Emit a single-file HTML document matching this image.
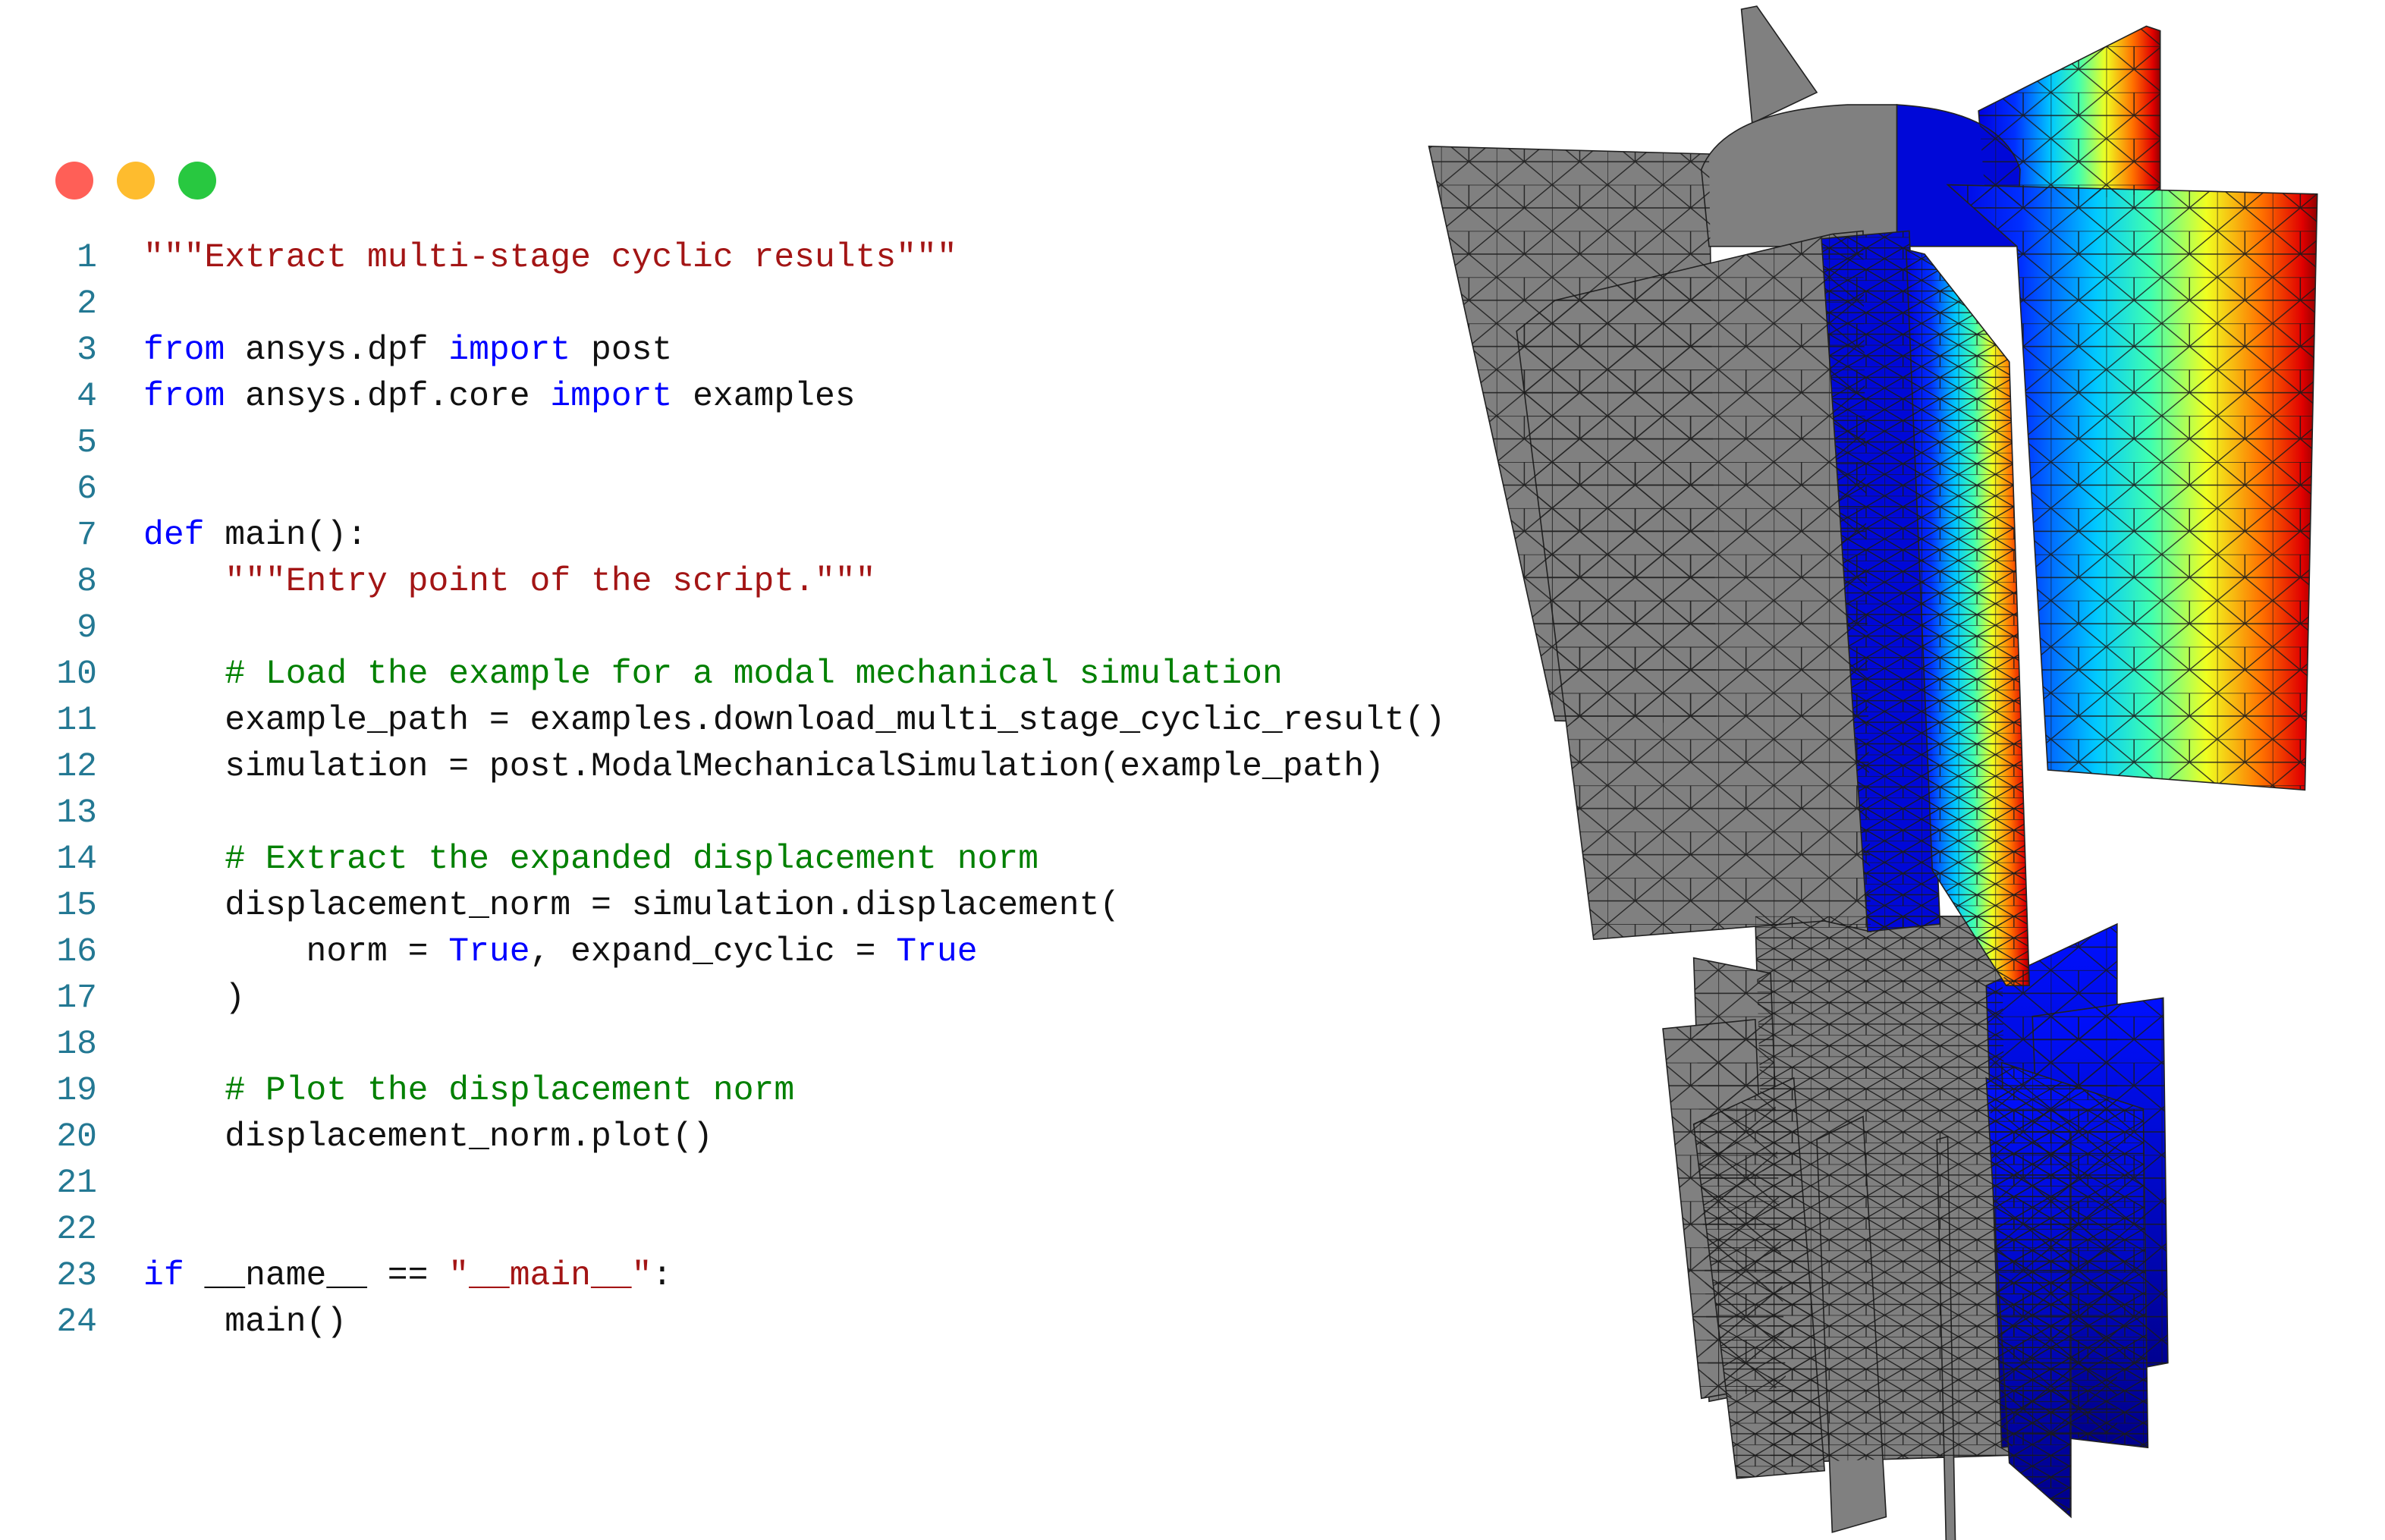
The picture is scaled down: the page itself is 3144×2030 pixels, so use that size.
<!DOCTYPE html>
<html><head><meta charset="utf-8"><style>
html,body{margin:0;padding:0;background:#fff;}
body{width:3144px;height:2030px;position:relative;overflow:hidden;}
.dot{position:absolute;width:50px;height:50px;border-radius:50%;top:213px;}
#code{position:absolute;left:0;top:310px;font-family:"Liberation Mono",monospace;font-size:44.7px;line-height:61px;white-space:pre;color:#111;}
.ln{display:inline-block;width:128px;text-align:right;color:#237893;margin-right:61px;}
.k{color:#0000ff}.s{color:#a31515}.c{color:#008000}
svg{position:absolute;left:0;top:0;}
</style></head><body>
<div class="dot" style="left:73px;background:#ff5f57"></div>
<div class="dot" style="left:154px;background:#febc2e"></div>
<div class="dot" style="left:235px;background:#28c840"></div>
<div id="code"><div><span class="ln">1</span><span class="s">"""Extract multi-stage cyclic results"""</span></div><div><span class="ln">2</span></div><div><span class="ln">3</span><span class="k">from</span> ansys.dpf <span class="k">import</span> post</div><div><span class="ln">4</span><span class="k">from</span> ansys.dpf.core <span class="k">import</span> examples</div><div><span class="ln">5</span></div><div><span class="ln">6</span></div><div><span class="ln">7</span><span class="k">def</span> main():</div><div><span class="ln">8</span>    <span class="s">"""Entry point of the script."""</span></div><div><span class="ln">9</span></div><div><span class="ln">10</span>    <span class="c"># Load the example for a modal mechanical simulation</span></div><div><span class="ln">11</span>    example_path = examples.download_multi_stage_cyclic_result()</div><div><span class="ln">12</span>    simulation = post.ModalMechanicalSimulation(example_path)</div><div><span class="ln">13</span></div><div><span class="ln">14</span>    <span class="c"># Extract the expanded displacement norm</span></div><div><span class="ln">15</span>    displacement_norm = simulation.displacement(</div><div><span class="ln">16</span>        norm = <span class="k">True</span>, expand_cyclic = <span class="k">True</span></div><div><span class="ln">17</span>    )</div><div><span class="ln">18</span></div><div><span class="ln">19</span>    <span class="c"># Plot the displacement norm</span></div><div><span class="ln">20</span>    displacement_norm.plot()</div><div><span class="ln">21</span></div><div><span class="ln">22</span></div><div><span class="ln">23</span><span class="k">if</span> __name__ == <span class="s">"__main__"</span>:</div><div><span class="ln">24</span>    main()</div></div>
<svg width="3144" height="2030" viewBox="0 0 1549 1000" preserveAspectRatio="none">
<defs>
<pattern id="m" width="36" height="30" patternUnits="userSpaceOnUse">
<path d="M0 0L36 0M0 15L36 15M0 0L18 15L36 0M0 30L18 15L36 30M18 15L18 0M0 0L0 30" stroke="#1a1a1a" stroke-width="0.7" fill="none"/>
</pattern>
<pattern id="m2" width="24" height="14" patternUnits="userSpaceOnUse">
<path d="M0 0L24 0M0 7L24 7M0 0L12 7L24 0M0 14L12 7L24 14M0 0L0 14M12 7L12 14" stroke="#1a1a1a" stroke-width="0.6" fill="none"/>
</pattern>
<linearGradient id="jet" x1="0" x2="1" y1="0" y2="0">
<stop offset="0" stop-color="#0000e0"/><stop offset="0.2" stop-color="#0030ff"/><stop offset="0.4" stop-color="#00c8ff"/><stop offset="0.55" stop-color="#40ffb0"/><stop offset="0.7" stop-color="#f0ff20"/><stop offset="0.85" stop-color="#ff7000"/><stop offset="0.96" stop-color="#e00000"/><stop offset="1" stop-color="#900000"/>
</linearGradient>
<linearGradient id="dblue" x1="0" x2="0" y1="0" y2="1"><stop offset="0" stop-color="#0010ff"/><stop offset="1" stop-color="#00008a"/></linearGradient>
</defs>
<g stroke="#222" stroke-width="0.8">
<polygon points="1131,6 1141,4 1180,60 1138,80" fill="#808080"/>
<polygon points="1285,72 1394,17 1403,20 1403,125 1290,135" fill="url(#jet)"/>
<polygon points="928,95 1110,100 1115,470 1010,468" fill="#808080"/>
<path d="M1105,110 Q1120,72 1200,68 L1232,68 L1232,160 L1110,160 Z" fill="#808080"/>
<path d="M1232,68 Q1300,72 1312,110 L1310,160 L1232,160 Z" fill="#0008d8"/>
<polygon points="1140,595 1300,595 1305,945 1150,950" fill="#808080"/>
<polygon points="1100,622 1150,632 1160,900 1110,910" fill="#808080"/>
<polygon points="1080,668 1140,662 1150,900 1105,908" fill="#808080"/>
<polygon points="1100,730 1165,700 1185,955 1128,960" fill="#808080"/>
<polygon points="1180,740 1210,725 1225,985 1190,995" fill="#808080"/>
<polygon points="1258,740 1265,738 1270,1005 1264,1005" fill="#808080"/>
<polygon points="1290,640 1375,600 1375,930 1300,940" fill="url(#dblue)"/>
<polygon points="1320,660 1405,648 1408,885 1330,900" fill="url(#dblue)"/>
<polygon points="1300,690 1392,720 1395,940 1310,930" fill="url(#dblue)"/>
<polygon points="1290,700 1345,735 1345,985 1305,950" fill="url(#dblue)"/>
<polygon points="985,215 1010,195 1190,152 1210,150 1215,605 1185,598 1035,610" fill="#808080"/>
<polygon points="1183,155 1240,150 1260,600 1213,605" fill="#0008d8"/>
<polygon points="1265,120 1505,126 1497,513 1330,500 1310,160" fill="url(#jet)"/>
<polygon points="1238,162 1250,165 1305,235 1318,640 1303,640 1255,565" fill="url(#jet)"/>
</g>
<g fill="url(#m)" stroke="none" opacity="0.9">
<polygon points="928,95 1110,100 1115,470 1010,468"/>
<polygon points="985,215 1010,195 1190,152 1210,150 1215,605 1185,598 1035,610"/>
<polygon points="1265,120 1505,126 1497,513 1330,500 1310,160"/>
<polygon points="1285,72 1394,17 1403,20 1403,125 1290,135"/>
<polygon points="1100,622 1150,632 1160,900 1110,910"/>
<polygon points="1080,668 1140,662 1150,900 1105,908"/>
<polygon points="1290,640 1375,600 1375,930 1300,940"/>
<polygon points="1320,660 1405,648 1408,885 1330,900"/>
</g>
<g fill="url(#m2)" stroke="none">
<polygon points="1183,155 1240,150 1260,600 1213,605"/>
<polygon points="1238,162 1250,165 1305,235 1318,640 1303,640 1255,565"/>
<polygon points="1140,595 1300,595 1305,945 1150,950"/>
<polygon points="1100,730 1165,700 1185,955 1128,960"/>
<polygon points="1300,690 1392,720 1395,940 1310,930"/>
<polygon points="1290,700 1345,735 1345,985 1305,950"/>
</g>
</svg>
</body></html>
